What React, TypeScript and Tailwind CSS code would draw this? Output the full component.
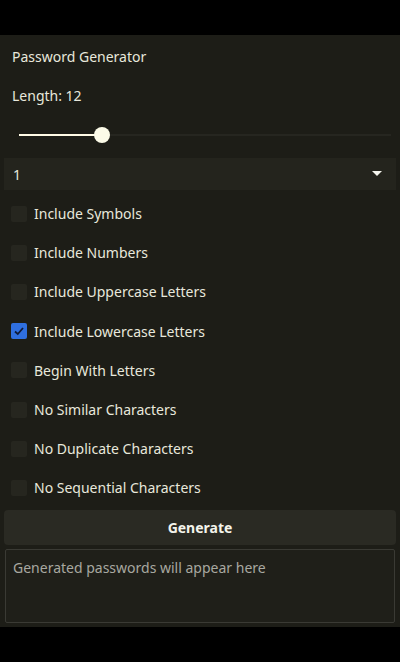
import React from "react";

const options = [
  { label: "Include Symbols", checked: false },
  { label: "Include Numbers", checked: false },
  { label: "Include Uppercase Letters", checked: false },
  { label: "Include Lowercase Letters", checked: true },
  { label: "Begin With Letters", checked: false },
  { label: "No Similar Characters", checked: false },
  { label: "No Duplicate Characters", checked: false },
  { label: "No Sequential Characters", checked: false },
];

export default function App() {
  return (
    <div
      className="w-[400px] h-[662px] bg-black flex flex-col text-[14px] text-[#e8e8dc]"
      style={{ fontFamily: '"Noto Sans", "Open Sans", sans-serif' }}
    >
      <div className="h-[35px] bg-black" />
      <div className="h-[592px] bg-[#1d1d17] flex flex-col">
        <div className="px-3 pt-[12px] h-[20px] leading-[20px] box-content">Password Generator</div>
        <div className="px-3 mt-[19px] h-[20px] leading-[20px]">Length: 12</div>
        <div className="relative mx-[19px] mt-[19px] h-[20px] flex items-center">
          <div className="absolute left-0 right-[-10px] h-[2px] bg-[#262620]" />
          <div className="absolute left-0 w-[83px] h-[2px] bg-[#fffbe6]" />
          <div className="absolute left-[75px] w-[16px] h-[16px] rounded-full bg-[#fcfbe8]" />
        </div>
        <div className="mx-1 mt-[13px] h-[32px] bg-[#24241d] flex items-center justify-between pl-[9px] pr-[14px]">
          <span>1</span>
          <svg width="10" height="6" viewBox="0 0 10 6">
            <path d="M0 0 L10 0 L5 5 Z" fill="#f5f5ee" />
          </svg>
        </div>
        <div className="flex flex-col mt-[4px]">
          {options.map((o) => (
            <div key={o.label} className="h-[39.2px] flex items-center pl-[11px] gap-[7px]">
              {o.checked ? (
                <div className="w-[16px] h-[16px] rounded-[2px] bg-[#2f6fe0] flex items-center justify-center">
                  <svg width="12" height="12" viewBox="0 0 12 12">
                    <path d="M2 6.5 L4.8 9 L10 3" fill="none" stroke="#0e1a3a" strokeWidth="1.8" />
                  </svg>
                </div>
              ) : (
                <div className="w-[16px] h-[16px] rounded-[2px] bg-[#26261f]" />
              )}
              <span>{o.label}</span>
            </div>
          ))}
        </div>
        <div className="mx-1 mt-[2px] h-[35px] rounded-[4px] bg-[#2a2a23] flex items-center justify-center font-bold text-[#f4f4ec]">
          Generate
        </div>
        <div className="mx-[5px] mt-[4px] h-[74px] border border-[#3a3a34] rounded-[2px] bg-[#1f1f19] px-[7px] pt-[7px] text-[#a8a8a0]">
          Generated passwords will appear here
        </div>
      </div>
    </div>
  );
}
